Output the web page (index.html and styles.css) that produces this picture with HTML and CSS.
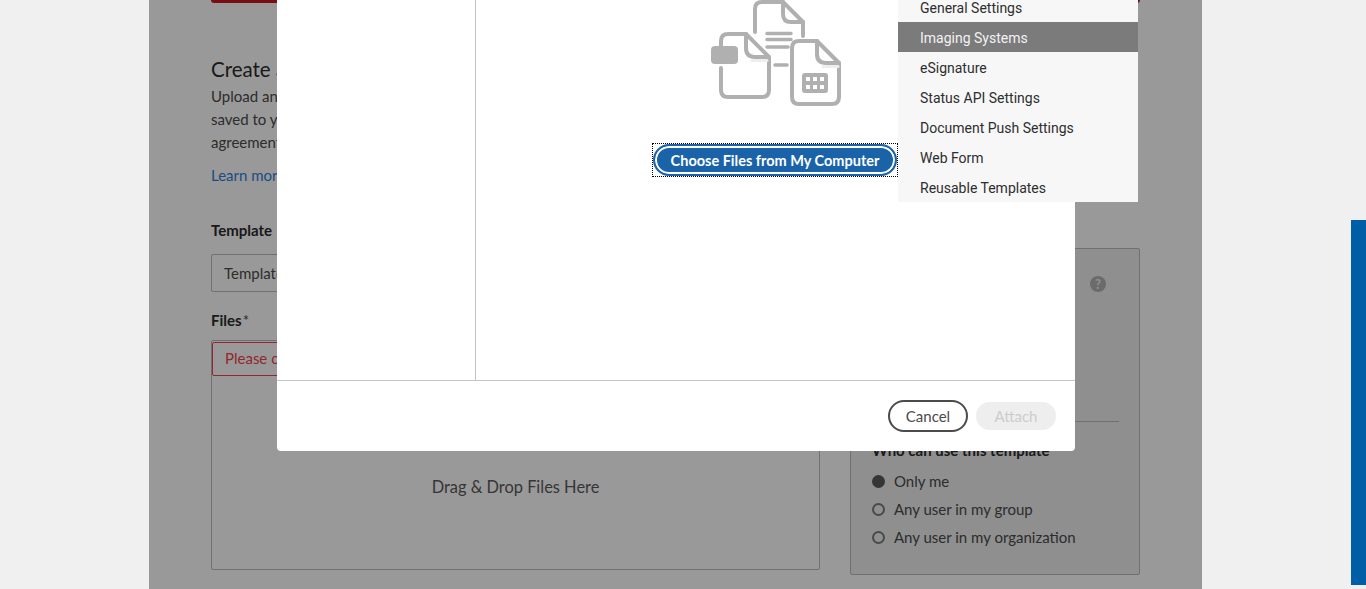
FILE: index.html
```html
<!DOCTYPE html>
<html lang="en">
<head>
<meta charset="utf-8">
<title>Create a template</title>
<link rel="stylesheet" href="styles.css">
</head>
<body>
<div class="page">
  <div class="red-bar"></div>
  <h1 class="title">Create a template</h1>
  <p class="intro">Upload and<br>saved to your<br>agreements</p>
  <a class="learn" href="#">Learn more</a>
  <div class="columns">
    <div class="form">
      <div class="label">Template name</div>
      <div class="input">Template</div>
      <div class="label files-label">Files<span class="star">*</span></div>
      <div class="drop">
        <div class="error">Please choose a file</div>
        <div class="drop-text">Drag &amp; Drop Files Here</div>
      </div>
    </div>
    <aside class="card">
      <div class="card-top"><span class="help">?</span></div>
      <div class="who">Who can use this template</div>
      <div class="radio"><span class="dot on"></span>Only me</div>
      <div class="radio"><span class="dot"></span>Any user in my group</div>
      <div class="radio"><span class="dot"></span>Any user in my organization</div>
    </aside>
  </div>
</div>
<div class="scrim"></div>
<div class="modal">
  <div class="modal-body">
    <div class="modal-side"></div>
    <div class="modal-main">
      <svg class="docs" width="150" height="110" viewBox="700 0 150 110" fill="none" stroke="#b0b0b0" stroke-width="4" stroke-linecap="round" stroke-linejoin="round">
        <path d="M755 32V9q0-7 7-7h21l20 20v14"/>
        <path d="M783 2v12q0 8 8 8h12"/>
        <path d="M767 33.500h24M767 39.500h24M767 47h21M775 65h12" stroke-width="3.500"/>
        <path d="M721 46V41q0-7 7-7h18l23 23v33q0 7-7 7h-34q-7 0-7-7V68"/>
        <path d="M746 34v14q0 9 9 9h14"/>
        <path d="M752 60.500h15" stroke="#eeeeee" stroke-width="3"/>
        <rect x="711" y="46" width="27" height="18" rx="4" fill="#b0b0b0" stroke="none"/>
        <path d="M792 48q0-7 7-7h18l22 22v34q0 7-7 7h-33q-7 0-7-7z"/>
        <path d="M817 41v13q0 9 9 9h13"/>
        <path d="M823 66.500h15" stroke="#eeeeee" stroke-width="3"/>
        <rect x="802" y="73" width="26" height="20" rx="3" fill="#b0b0b0" stroke="none"/>
        <path d="M806 77h4v4h-4zM813 77h4v4h-4zM820 77h4v4h-4zM806 85h4v4h-4zM813 85h4v4h-4zM820 85h4v4h-4z" fill="#ffffff" stroke="none"/>
      </svg>
      <span class="focus-ring"><button class="choose" type="button">Choose Files from My Computer</button></span>
    </div>
  </div>
  <div class="modal-foot">
    <button class="btn cancel" type="button">Cancel</button>
    <button class="btn attach" type="button">Attach</button>
  </div>
</div>
<ul class="menu">
  <li>General Settings</li>
  <li class="active">Imaging Systems</li>
  <li>eSignature</li>
  <li>Status API Settings</li>
  <li>Document Push Settings</li>
  <li>Web Form</li>
  <li>Reusable Templates</li>
</ul>
<div class="side-tab"></div>
</body>
</html>
```
FILE: styles.css
```css
* { box-sizing: border-box; }
html, body { margin: 0; height: 589px; overflow: hidden; }
body {
  background: #f0f0f0;
  font-family: Lato, "Open Sans", "Liberation Sans", sans-serif;
  font-size: 15px;
  color: #4b4b4b;
  position: relative;
}
.page {
  margin-left: 149px;
  width: 1053px;
  height: 589px;
  padding: 0 62px;
  background: #fff;
  overflow: hidden;
}
.red-bar {
  height: 3px;
  background: #cc1921;
  border-radius: 0 0 4px 4px;
}
.title {
  margin: 53px 0 0;
  font-size: 20.500px;
  line-height: 26px;
  font-weight: 400;
  color: #2c2c2c;
}
.intro {
  margin: 3px 0 0;
  line-height: 23px;
}
.learn {
  display: block;
  margin-top: 10px;
  line-height: 23px;
  color: #2f7fd8;
  text-decoration: none;
}
.columns { display: flex; gap: 30px; margin-top: 33px; }
.form { width: 609px; }
.label {
  line-height: 20px;
  font-weight: 700;
  word-spacing: 2px;
  color: #2c2c2c;
}
.star { font-weight: 400; margin-left: 1px; color: #4b4b4b; }
.input {
  margin-top: 14px;
  height: 38px;
  padding-left: 12px;
  border: 1px solid #bbb;
  border-radius: 2px;
  line-height: 36px;
}
.files-label { margin-top: 18px; }
.drop {
  margin-top: 10px;
  height: 230px;
  border: 1px solid #bbb;
  border-radius: 2px;
  text-align: center;
}
.error {
  margin: 1px 0 0;
  height: 34px;
  padding-left: 12px;
  border: 1px solid #f5404e;
  border-radius: 2px;
  color: #f5404e;
  text-align: left;
  line-height: 30px;
}
.drop-text { margin-top: 100px; font-size: 16.400px; line-height: 22px; color: #5a5a5a; }
.card {
  width: 290px;
  height: 327px;
  margin-top: 28px;
  padding: 0 20px 0 21px;
  background: #eee;
  border: 1px solid #bbb;
  border-radius: 2px;
}
.card-top {
  height: 173px;
  padding-top: 25px;
  text-align: right;
  border-bottom: 1px solid #bbb;
}
.help {
  display: inline-block;
  width: 16px;
  height: 16px;
  margin-right: 13px;
  border-radius: 50%;
  background: #b3b3b3;
  color: #eee;
  font-size: 13px;
  font-weight: 700;
  line-height: 16px;
  text-align: center;
}
.who {
  margin-top: 18px;
  line-height: 20px;
  font-weight: 700;
  color: #2c2c2c;
}
.radio { display: flex; align-items: center; gap: 9px; height: 28px; }
.who + .radio { margin-top: 7px; }
.dot {
  width: 13px;
  height: 13px;
  border-radius: 50%;
  border: 2px solid #7a7a7a;
}
.dot.on { background: #5a5a5a; border-color: #5a5a5a; }
.scrim {
  position: absolute;
  left: 149px;
  top: 0;
  width: 1053px;
  height: 589px;
  background: rgba(0, 0, 0, .4);
}
.modal {
  position: absolute;
  left: 277px;
  top: 0;
  width: 798px;
  height: 451px;
  display: flex;
  flex-direction: column;
  background: #fff;
  border-radius: 0 0 4px 4px;
}
.modal-body { flex: 1; display: flex; min-height: 0; }
.modal-side { width: 199px; border-right: 1px solid #c4c4c4; }
.modal-main {
  flex: 1;
  display: flex;
  flex-direction: column;
  align-items: center;
  padding-right: 1px;
}
.docs { display: block; }
.focus-ring {
  display: block;
  margin-top: 33px;
  width: 246px;
  height: 34px;
  border: 1px dotted #000;
}
.choose {
  display: block;
  width: 244px;
  height: 32px;
  padding: 0;
  border: 2px solid #1b63a9;
  border-radius: 16px;
  background: #1b63a9;
  box-shadow: inset 0 0 0 2px #fff;
  color: #fff;
  font: 700 14.500px Lato, "Open Sans", sans-serif;
}
.modal-foot {
  flex: none;
  height: 71px;
  display: flex;
  justify-content: flex-end;
  align-items: center;
  gap: 8px;
  padding: 0 19px 0 0;
  border-top: 1px solid #c4c4c4;
}
.btn {
  width: 80px;
  border-radius: 16px;
  padding: 0;
  font: 400 15px Lato, "Open Sans", sans-serif;
}
.cancel { height: 32px; background: #fff; border: 2px solid #4b4b4b; color: #4b4b4b; }
.attach { height: 28px; background: #eee; border: 0; color: #ccc; }
.menu {
  position: absolute;
  left: 898px;
  top: -8px;
  width: 240px;
  margin: 0;
  padding: 0;
  list-style: none;
  background: #f7f7f7;
  font-family: Roboto, "Liberation Sans", sans-serif;
  font-size: 14px;
  color: #2e2e2e;
}
.menu li { height: 30px; padding-left: 22px; line-height: 32px; }
.menu li.active { background: #7b7b7c; color: #f2f2f2; }
.side-tab {
  position: absolute;
  right: 0;
  top: 220px;
  width: 15px;
  height: 365px;
  background: #005ea6;
}
```
